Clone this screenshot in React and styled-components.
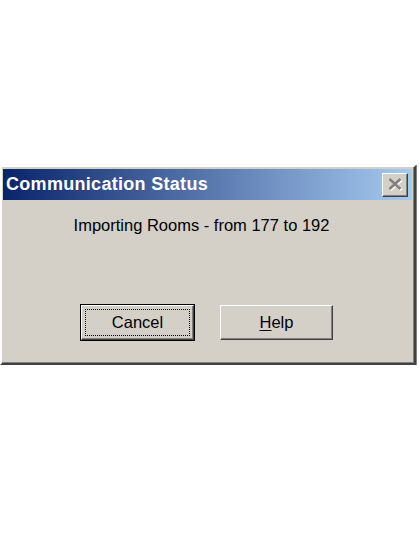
import styled, { createGlobalStyle } from "styled-components";

const GlobalStyle = createGlobalStyle`
    html, body {
        margin: 0;
        padding: 0;
        background: #ffffff;
    }
    body {
        font-family: "Liberation Sans", Arial, sans-serif;
    }
`

export default function App() {
    return (
        <>
            <GlobalStyle />
            <Page>
                <Dialog>
                    <TitleBar>
                        <Title>Communication Status</Title>
                        <CloseButton aria-label="Close">
                            <svg width="17" height="15" viewBox="0 0 17 15">
                                <path d="M2.5 2 L13.5 12 M13.5 2 L2.5 12" stroke="#ffffff" strokeWidth="2.6" transform="translate(1 1)" />
                                <path d="M2.5 2 L13.5 12 M13.5 2 L2.5 12" stroke="#808080" strokeWidth="2.6" />
                            </svg>
                        </CloseButton>
                    </TitleBar>
                    <Body>
                        <Message>Importing Rooms - from 177 to 192</Message>
                        <Buttons>
                            <DefaultFrame>
                                <Button>
                                    <Focus>Cancel</Focus>
                                </Button>
                            </DefaultFrame>
                            <Button>
                                <Label><u>H</u>elp</Label>
                            </Button>
                        </Buttons>
                    </Body>
                </Dialog>
                <Edge />
            </Page>
        </>
    )
}

const Page = styled.div`
    display: flex;
    align-items: flex-start;
    padding-top: 165px;
    width: 420px;
    height: 534px;
    box-sizing: border-box;
`

const Dialog = styled.div`
    width: 417px;
    height: 200px;
    box-sizing: border-box;
    background: #d4d0c8;
    border-top: 2px solid #ffffff;
    border-left: 2px solid #ffffff;
    border-right: 2px solid #404040;
    border-bottom: 2px solid #404040;
    box-shadow: inset -1px -1px 0 #808080, inset 1px 1px 0 #d4d0c8;
    padding: 2px 2px 2px 1px;
    display: flex;
    flex-direction: column;
`

const TitleBar = styled.div`
    height: 31px;
    display: flex;
    align-items: center;
    justify-content: space-between;
    padding: 0 4px 0 3px;
    background: linear-gradient(to right, #0a246a, #a6caf0);
`

const Title = styled.span`
    color: #ffffff;
    font-weight: bold;
    font-size: 18px;
    letter-spacing: 0.3px;
`

const CloseButton = styled.button`
    width: 26px;
    height: 24px;
    padding: 0;
    display: flex;
    align-items: center;
    justify-content: center;
    background: #d4d0c8;
    border-top: 1px solid #ffffff;
    border-left: 1px solid #ffffff;
    border-right: 1px solid #404040;
    border-bottom: 1px solid #404040;
    box-shadow: inset -1px -1px 0 #808080;
`

const Body = styled.div`
    flex: 1;
    display: flex;
    flex-direction: column;
    align-items: center;
`

const Message = styled.p`
    margin: 16px 12px 0 0;
    font-size: 16.5px;
    color: #000000;
`

const Buttons = styled.div`
    display: flex;
    align-items: center;
    gap: 25px;
    margin-top: 69px;
    margin-right: 2px;
`

const DefaultFrame = styled.div`
    border: 1px solid #000000;
    display: flex;
`

const Button = styled.div`
    width: 113px;
    height: 35px;
    box-sizing: border-box;
    background: #d4d0c8;
    border-top: 1px solid #ffffff;
    border-left: 1px solid #ffffff;
    border-right: 1px solid #404040;
    border-bottom: 1px solid #404040;
    box-shadow: inset -1px -1px 0 #808080;
    display: flex;
    align-items: center;
    justify-content: center;
    padding: 3px;
    font-size: 16.5px;
    color: #000000;
`

const Focus = styled.span`
    flex: 1;
    align-self: stretch;
    display: flex;
    align-items: center;
    justify-content: center;
    border: 1px dotted #000000;
`

const Label = styled.span`
    > u {
        text-decoration-thickness: 1px;
        text-underline-offset: 2px;
    }
`

const Edge = styled.div`
    width: 3px;
    height: 200px;
    border-left: 1px solid #808080;
`
